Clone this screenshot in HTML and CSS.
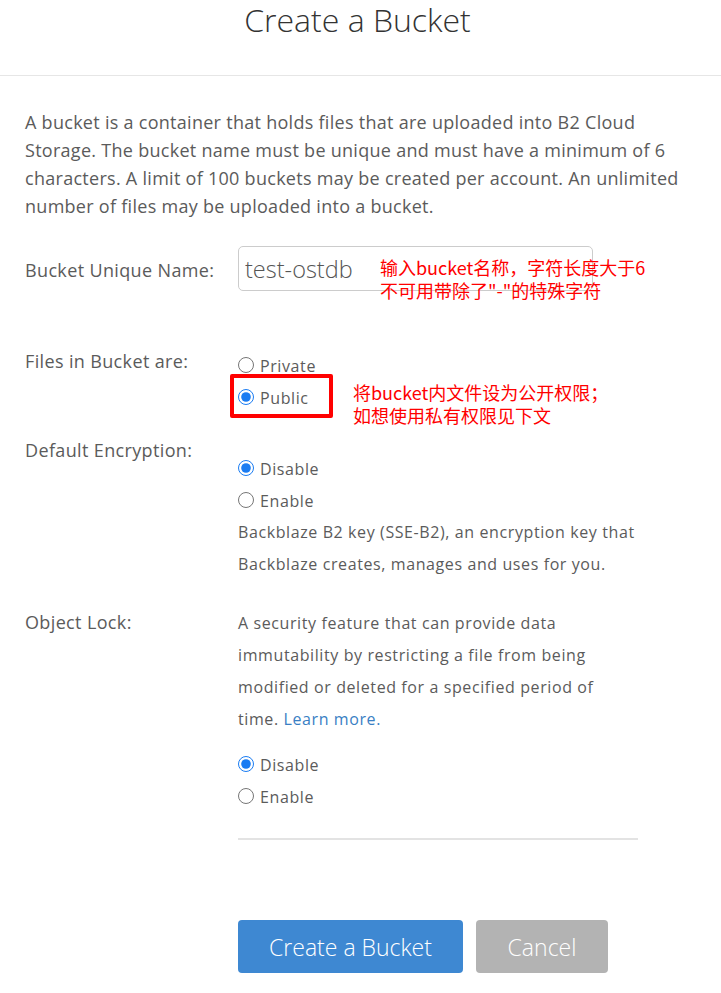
FILE: index.html
```html
<!DOCTYPE html>
<html lang="en">
<head>
<meta charset="utf-8">
<title>Create a Bucket</title>
<link rel="stylesheet" href="styles.css">
</head>
<body>
<header class="head">
  <h1 class="title">Create a Bucket</h1>
</header>
<main class="content">
  <p class="intro">A bucket is a container that holds files that are uploaded into B2 Cloud Storage. The bucket name must be unique and must have a minimum of 6 characters. A limit of 100 buckets may be created per account. An unlimited number of files may be uploaded into a bucket.</p>

  <div class="row row-name">
    <div class="label">Bucket Unique Name:</div>
    <div class="ctrl ctrl-name">
      <input class="name-input" type="text" value="test-ostdb">
      <div class="note note-name">输入bucket名称，字符长度大于6<br>不可用带除了"-"的特殊字符</div>
    </div>
  </div>

  <div class="row row-files">
    <div class="label">Files in Bucket are:</div>
    <div class="ctrl ctrl-files">
      <label class="radio"><input type="radio" name="files"><span>Private</span></label>
      <label class="radio"><input type="radio" name="files" checked><span>Public</span></label>
      <div class="mark-box"></div>
      <div class="note note-files">将bucket内文件设为公开权限；<br>如想使用私有权限见下文</div>
    </div>
  </div>

  <div class="row row-enc">
    <div class="label">Default Encryption:</div>
    <div class="ctrl ctrl-enc">
      <label class="radio"><input type="radio" name="enc" checked><span>Disable</span></label>
      <label class="radio"><input type="radio" name="enc"><span>Enable</span></label>
      <p class="desc desc-enc">Backblaze B2 key (SSE-B2), an encryption key that Backblaze creates, manages and uses for you.</p>
    </div>
  </div>

  <div class="row row-lock">
    <div class="label">Object Lock:</div>
    <div class="ctrl ctrl-lock">
      <p class="desc desc-lock">A security feature that can provide data immutability by restricting a file from being modified or deleted for a specified period of time. <a class="link" href="#">Learn more.</a></p>
      <div class="radios-lock">
        <label class="radio"><input type="radio" name="lock" checked><span>Disable</span></label>
        <label class="radio"><input type="radio" name="lock"><span>Enable</span></label>
      </div>
      <div class="divider"></div>
    </div>
  </div>

  <div class="row row-actions">
    <div></div>
    <div class="actions">
      <button class="btn btn-primary" type="button">Create a Bucket</button>
      <button class="btn btn-cancel" type="button">Cancel</button>
    </div>
  </div>
</main>
</body>
</html>
```

FILE: styles.css
```css
html, body {
  margin: 0;
  padding: 0;
  background: #ffffff;
}

body {
  font-family: "Open Sans", "Noto Sans", sans-serif;
  color: #5b5b5b;
  width: 721px;
  height: 993px;
  overflow: hidden;
}

.head {
  height: 75px;
  border-bottom: 1px solid #e6e6e6;
  text-align: center;
}

.title {
  margin: 0;
  font-weight: 300;
  font-size: 32px;
  line-height: 40px;
  color: #333333;
  padding-right: 6px;
}

.content {
  padding: 32px 25px 0;
}

.intro {
  margin: 0;
  font-size: 18px;
  line-height: 28px;
  letter-spacing: 0.28px;
}

.row {
  display: grid;
  grid-template-columns: 213px 1fr;
}

.label {
  font-size: 18px;
  line-height: 28px;
  letter-spacing: 0.36px;
}

.ctrl {
  position: relative;
}

.row-name {
  margin-top: 26px;
}

.row-name .label {
  line-height: 45px;
  padding-top: 2px;
}

.name-input {
  box-sizing: border-box;
  width: 355px;
  height: 45px;
  border: 1px solid #cccccc;
  border-radius: 5px;
  padding: 0 6px;
  font-family: "Open Sans", sans-serif;
  font-weight: 300;
  font-size: 23.5px;
  color: #555555;
  outline: none;
  display: block;
}

.note {
  position: absolute;
  color: #ff0000;
  font-family: "Noto Sans CJK SC", "Open Sans", sans-serif;
  font-size: 18px;
  line-height: 23px;
  white-space: nowrap;
}

.note-name {
  left: 142px;
  top: 10px;
}

.row-files {
  margin-top: 54px;
}

.ctrl-files {
  padding-top: 2px;
}

.radio {
  display: flex;
  align-items: center;
  height: 32px;
  font-size: 16px;
  letter-spacing: 0.6px;
  gap: 6px;
}

.radio input {
  width: 16px;
  height: 16px;
  margin: 0;
  accent-color: #1a7cf2;
}

.radio span {
  padding-top: 2px;
}

.mark-box {
  position: absolute;
  left: -8px;
  top: 27px;
  width: 95px;
  height: 36px;
  border: 4px solid #ff0000;
  border-radius: 2px;
}

.note-files {
  left: 115px;
  top: 34px;
}

.row-enc {
  margin-top: 23px;
}

.ctrl-enc {
  padding-top: 16px;
}

.desc {
  margin: 0;
  font-size: 16px;
  line-height: 32px;
  letter-spacing: 0.6px;
}

.desc-enc {
  width: 410px;
}

.row-lock {
  margin-top: 28px;
}

.ctrl-lock {
  margin-top: -1px;
}

.desc-lock {
  width: 395px;
}

.link {
  color: #3a7fc4;
  text-decoration: none;
}

.radios-lock {
  margin-top: 13px;
}

.divider {
  margin-top: 26px;
  width: 400px;
  height: 2px;
  background: #e3e3e3;
}

.row-actions {
  margin-top: 80px;
}

.actions {
  display: flex;
  gap: 13px;
}

.btn {
  height: 53px;
  border: none;
  border-radius: 4px;
  color: #ffffff;
  font-family: "Open Sans", sans-serif;
  font-weight: 300;
  font-size: 23px;
  padding: 0;
}

.btn-primary {
  width: 225px;
  background: #3e88d2;
}

.btn-cancel {
  width: 132px;
  background: #b3b3b3;
}
```
